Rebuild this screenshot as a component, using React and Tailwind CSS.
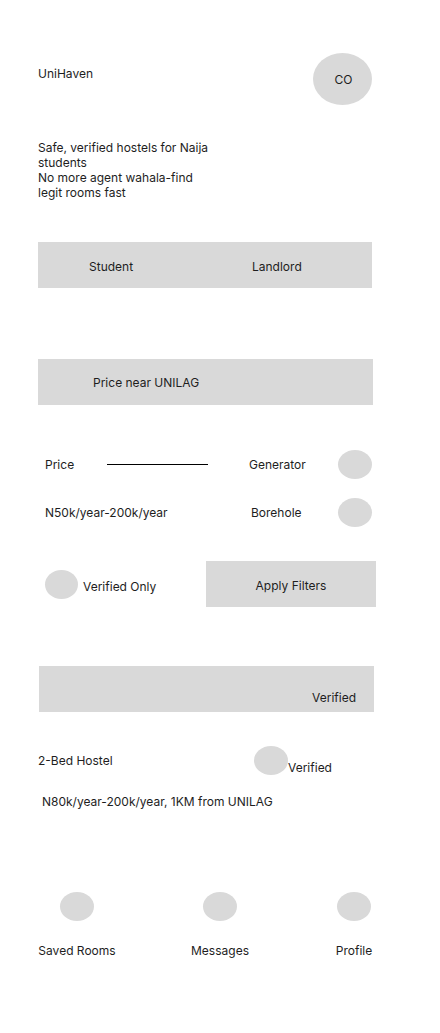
import React from 'react';

// Grey placeholder blob used all over the wireframe
const Dot = ({ className = "" }) => (
  <div className={`bg-[#d9d9d9] rounded-[50%] shrink-0 ${className}`} />
);

const NavItem = ({ label, className = "" }) => (
  <div className={`w-[80px] flex flex-col items-center ${className}`}>
    <Dot className="w-[34px] h-[29px]" />
    <span className="mt-[22px] leading-[15px]">{label}</span>
  </div>
);

export default function App() {
  return (
    <div className="w-[440px] min-h-[1033px] bg-white text-[12px] leading-[15px] text-[#1e1e1e] font-['Inter','Liberation_Sans',sans-serif]">
      {/* Header */}
      <div className="flex justify-between pt-[53px] pl-[38px] pr-[68px]">
        <span className="mt-[13px]">UniHaven</span>
        <div className="w-[59px] h-[52px] rounded-[50%] bg-[#d9d9d9] flex items-center justify-center pl-[2px]">
          CO
        </div>
      </div>

      {/* Tagline */}
      <p className="ml-[38px] mt-[35px] w-[176px]">
        Safe, verified hostels for Naija students
        <br />
        No more agent wahala-find legit rooms fast
      </p>

      {/* Role toggle */}
      <div className="ml-[38px] mt-[42px] w-[334px] h-[46px] bg-[#d9d9d9] flex items-center pl-[51px] pt-[2px]">
        <span className="w-[163px]">Student</span>
        <span>Landlord</span>
      </div>

      {/* Search */}
      <div className="ml-[38px] mt-[71px] w-[335px] h-[46px] bg-[#d9d9d9] flex items-center pl-[55px]">
        Price near UNILAG
      </div>

      {/* Filters */}
      <div className="mt-[45px] pl-[45px] flex items-center h-[29px]">
        <span className="w-[62px]">Price</span>
        <div className="w-[101px] h-px bg-black" />
        <span className="ml-[41px] w-[89px]">Generator</span>
        <Dot className="w-[34px] h-[29px]" />
      </div>
      <div className="mt-[19px] pl-[45px] flex items-center h-[29px]">
        <span className="w-[206px]">N50k/year-200k/year</span>
        <span className="w-[87px]">Borehole</span>
        <Dot className="w-[34px] h-[29px]" />
      </div>
      <div className="mt-[34px] ml-[45px] w-[331px] flex items-center">
        <Dot className="w-[33px] h-[29px]" />
        <span className="ml-[5px] mt-[4px]">Verified Only</span>
        <button className="ml-auto w-[170px] h-[46px] bg-[#d9d9d9] flex items-center justify-center pt-[3px]">
          Apply Filters
        </button>
      </div>

      {/* Listing card */}
      <div className="ml-[39px] mt-[59px] w-[335px] h-[46px] bg-[#d9d9d9] flex items-end justify-end pr-[18px] pb-[7px]">
        Verified
      </div>
      <div className="mt-[34px] pl-[38px] flex items-start">
        <span className="w-[216px] mt-[7px]">2-Bed Hostel</span>
        <Dot className="w-[34px] h-[29px]" />
        <span className="mt-[14px]">Verified</span>
      </div>
      <p className="ml-[42px] mt-[19px]">N80k/year-200k/year, 1KM from UNILAG</p>

      {/* Bottom nav */}
      <div className="mt-[83px] pl-[37px] flex">
        <NavItem label="Saved Rooms" />
        <NavItem label="Messages" className="ml-[63px]" />
        <NavItem label="Profile" className="ml-[54px]" />
      </div>
    </div>
  );
}
